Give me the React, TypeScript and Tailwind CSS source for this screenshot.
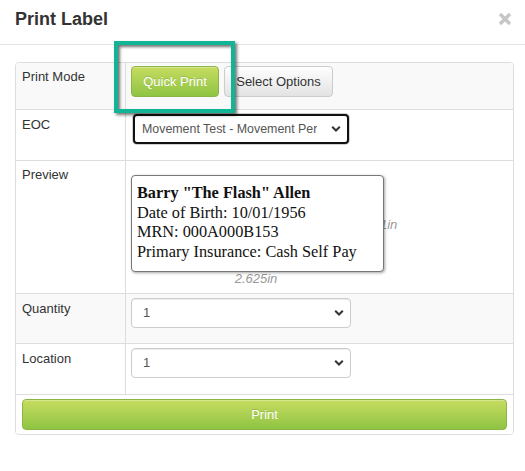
import React from "react";

function Chevron() {
  return (
    <svg width="10" height="7" viewBox="0 0 10 7" className="absolute right-[6px] top-1/2 -translate-y-1/2">
      <polyline points="1.2,1.2 5,5 8.8,1.2" fill="none" stroke="#333" strokeWidth="2" />
    </svg>
  );
}

function FakeSelect({ text, focused, width }: { text: string; focused?: boolean; width: number }) {
  return (
    <div
      style={{ width }}
      className={
        "relative h-[30px] rounded-[4px] bg-white flex items-center text-[#555] " +
        (focused
          ? "border-2 border-[#111] pl-[7px] text-[12.4px] shadow-[0_0_0_1px_#d0d0d0]"
          : "border border-[#ccc] pl-[11px] text-[13px] shadow-[inset_0_1px_1px_rgba(0,0,0,0.075)]")
      }
    >
      <span className="block overflow-hidden whitespace-nowrap mr-[20px]">{text}</span>
      <Chevron />
    </div>
  );
}

export default function App() {
  const label = "pl-[6px] text-[13px] leading-[20px] text-[#333]";
  return (
    <div className="relative w-[525px] h-[471px] bg-white font-['Liberation_Sans',Arial,sans-serif] text-[#333]">
      <div className="h-[45px] border-b border-[#e5e5e5] flex items-start justify-between pl-[15px] pr-[13px]">
        <h4 className="pt-[7px] text-[18px] leading-[25px] font-bold text-[#333]">Print Label</h4>
        <svg width="14" height="14" viewBox="0 0 14 14" className="mt-[12px]">
          <line x1="2" y1="2" x2="12" y2="12" stroke="#c6c6c6" strokeWidth="3.4" />
          <line x1="12" y1="2" x2="2" y2="12" stroke="#c6c6c6" strokeWidth="3.4" />
        </svg>
      </div>

      <div className="pt-[17px] pl-[15px]">
        <div className="w-[499px] border border-[#ddd] rounded-[4px] overflow-hidden">
          {/* Print Mode */}
          <div className="grid grid-cols-[109px_1fr] h-[46px] bg-[#f9f9f9]">
            <div className={label + " pt-[4px]"}>Print Mode</div>
            <div className="border-l border-[#ddd] pl-[5px] pt-[3px] flex gap-[5px]">
              <button className="h-[31px] w-[88px] rounded-[4px] border border-[#8db446] bg-gradient-to-b from-[#c6dc60] to-[#8fc443] text-white text-[13px] [text-shadow:0_-1px_0_rgba(0,0,0,0.15)] shadow-[inset_0_1px_0_rgba(255,255,255,0.3)]">
                Quick Print
              </button>
              <button className="h-[31px] w-[109px] rounded-[4px] border border-[#ccc] bg-gradient-to-b from-white to-[#e3e3e3] text-[#333] text-[13px]">
                Select Options
              </button>
            </div>
          </div>

          {/* EOC */}
          <div className="grid grid-cols-[109px_1fr] h-[51px] border-t border-[#ddd] bg-white">
            <div className={label + " pt-[5px]"}>EOC</div>
            <div className="border-l border-[#ddd] pl-[7px] pt-[4px]">
              <FakeSelect text="Movement Test - Movement Per" focused width={216} />
            </div>
          </div>

          {/* Preview */}
          <div className="grid grid-cols-[109px_1fr] h-[133px] border-t border-[#ddd] bg-white">
            <div className={label + " pt-[4px]"}>Preview</div>
            <div className="border-l border-[#ddd] pl-[5px] pt-[14px]">
              <div className="relative w-[253px]">
                <span className="absolute left-[249px] top-[40px] text-[13px] italic text-[#999] leading-[20px]">1in</span>
                <div className="relative w-[253px] h-[97px] border border-[#777] rounded-[4px] bg-white shadow-[1px_1px_3px_rgba(0,0,0,0.35)] pl-[5px] pt-[7px] font-['Liberation_Serif','Times_New_Roman',serif] text-[16.3px] leading-[19.5px] text-[#111]">
                  <div className="font-bold">Barry "The Flash" Allen</div>
                  <div>Date of Birth: 10/01/1956</div>
                  <div>MRN: 000A000B153</div>
                  <div>Primary Insurance: Cash Self Pay</div>
                </div>
                <div className="text-center text-[13px] italic text-[#999] leading-[14px] pr-[3px]">2.625in</div>
              </div>
            </div>
          </div>

          {/* Quantity */}
          <div className="grid grid-cols-[109px_1fr] h-[50px] border-t border-[#ddd] bg-[#f9f9f9]">
            <div className={label + " pt-[5px]"}>Quantity</div>
            <div className="border-l border-[#ddd] pl-[5px] pt-[4px]">
              <FakeSelect text="1" width={220} />
            </div>
          </div>

          {/* Location */}
          <div className="grid grid-cols-[109px_1fr] h-[51px] border-t border-[#ddd] bg-white">
            <div className={label + " pt-[5px]"}>Location</div>
            <div className="border-l border-[#ddd] pl-[5px] pt-[4px]">
              <FakeSelect text="1" width={220} />
            </div>
          </div>

          {/* Print */}
          <div className="h-[40px] border-t border-[#ddd] bg-white pl-[6px] pr-[6px] pt-[4px]">
            <button className="w-full h-[31px] rounded-[4px] border border-[#8db446] bg-gradient-to-b from-[#c6dc60] to-[#8fc443] text-white text-[13px] [text-shadow:0_-1px_0_rgba(0,0,0,0.15)] shadow-[inset_0_1px_0_rgba(255,255,255,0.3)]">
              Print
            </button>
          </div>
        </div>
      </div>

      {/* annotation highlight */}
      <div className="absolute left-[114px] top-[41px] w-[121px] h-[72px] border-[4px] border-[#12b496] shadow-[2px_2px_3px_rgba(0,0,0,0.55),inset_2px_2px_3px_rgba(0,0,0,0.55)]" />
    </div>
  );
}
